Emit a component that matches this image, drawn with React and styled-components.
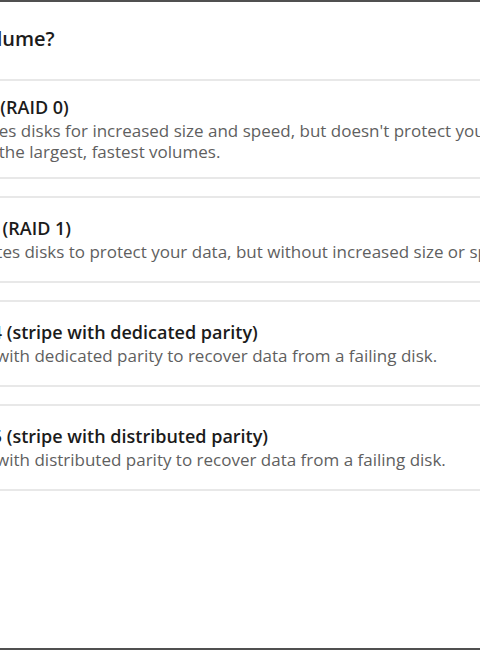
import React from 'react';
import styled, { createGlobalStyle } from 'styled-components';

const GlobalStyle = createGlobalStyle`
    html, body {
        margin: 0;
        padding: 0;
        background: #ffffff;
    }
    * {
        box-sizing: border-box;
    }
`

// visible window onto a wider dialog
const Frame = styled.div`
    width: 480px;
    height: 650px;
    overflow: hidden;
    background: #ffffff;
    border-top: 2px solid #505050;
    border-bottom: 2px solid #505050;
    font-family: "Open Sans", "Noto Sans", sans-serif;
`
const Dialog = styled.div`
    width: 1000px;
    margin-left: -63px;
`
const Header = styled.h2`
    margin: 0 0 0 -92px;
    padding: 23px 0 0;
    height: 77px;
    font-size: 20px;
    line-height: 28px;
    font-weight: 600;
    color: #1b1b1b;
    white-space: nowrap;
`
const OptionList = styled.div`
    display: flex;
    flex-direction: column;
    gap: 17px;
`
const Option = styled.div`
    min-height: 87px;
    padding: 13px 0 15px;
    border-top: 2px solid #e8e8e8;
    border-bottom: 2px solid #e8e8e8;
    display: flex;
    flex-direction: column;
    justify-content: center;
`
const OptionTitle = styled.div`
    margin-left: ${(p) => p.$shift || 0}px;
    font-size: 18px;
    line-height: 26px;
    font-weight: 600;
    color: #1b1b1b;
    white-space: nowrap;
`
const OptionText = styled.p`
    margin: 0;
    font-size: 17px;
    line-height: 21px;
    color: #5f5f5f;
    white-space: nowrap;
`

const options = [
    {
        title: 'Simple (RAID 0)',
        shift: 0,
        lines: [
            "Combines disks for increased size and speed, but doesn't protect your data from drive failures.",
            'Use for the largest, fastest volumes.',
        ],
    },
    {
        title: 'Mirror (RAID 1)',
        shift: 5,
        lines: ['Duplicates disks to protect your data, but without increased size or speed.'],
    },
    {
        title: 'RAID 4 (stripe with dedicated parity)',
        shift: 8,
        lines: ['Stripes with dedicated parity to recover data from a failing disk.'],
    },
    {
        title: 'RAID 5 (stripe with distributed parity)',
        shift: 8,
        lines: ['Stripes with distributed parity to recover data from a failing disk.'],
    },
]

function App() {
    return (
        <Frame>
            <GlobalStyle />
            <Dialog>
                <Header>What type of volume?</Header>
                <OptionList>
                    {options.map((o) => (
                        <Option key={o.title}>
                            <OptionTitle $shift={o.shift}>{o.title}</OptionTitle>
                            {o.lines.map((l) => (
                                <OptionText key={l}>{l}</OptionText>
                            ))}
                        </Option>
                    ))}
                </OptionList>
            </Dialog>
        </Frame>
    )
}

export default App;
